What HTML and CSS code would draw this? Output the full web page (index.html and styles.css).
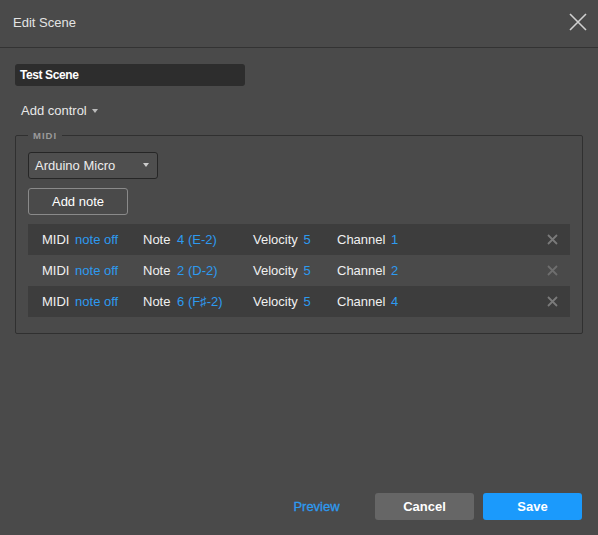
FILE: index.html
```html
<!DOCTYPE html>
<html>
<head>
<meta charset="utf-8">
<link rel="stylesheet" href="styles.css">
</head>
<body>
<div class="dialog">
  <header class="header">
    <span class="title">Edit Scene</span>
    <svg class="close" width="18" height="18" viewBox="0 0 18 18"><path d="M1 1L17 17M17 1L1 17" stroke="#d0d0d0" stroke-width="1.6" fill="none"/></svg>
  </header>
  <main class="content">
    <div class="name-input">Test Scene</div>
    <div class="add-control">Add control <span class="caret"></span></div>
    <fieldset class="group">
      <legend class="legend">MIDI</legend>
      <div class="select">Arduino Micro <span class="caret"></span></div>
      <button class="outline-btn">Add note</button>
      <div class="rows">
        <div class="row dark">
          <div class="cell c1">MIDI <span class="val">note off</span></div>
          <div class="cell c2">Note <span class="val">4 (E-2)</span></div>
          <div class="cell c3">Velocity <span class="val">5</span></div>
          <div class="cell c4">Channel <span class="val">1</span></div>
          <svg class="del" width="11" height="11" viewBox="0 0 11 11"><path d="M1 1L10 10M10 1L1 10" stroke="#7a7a7a" stroke-width="1.8" fill="none"/></svg>
        </div>
        <div class="row">
          <div class="cell c1">MIDI <span class="val">note off</span></div>
          <div class="cell c2">Note <span class="val">2 (D-2)</span></div>
          <div class="cell c3">Velocity <span class="val">5</span></div>
          <div class="cell c4">Channel <span class="val">2</span></div>
          <svg class="del" width="11" height="11" viewBox="0 0 11 11"><path d="M1 1L10 10M10 1L1 10" stroke="#6e6e6e" stroke-width="1.8" fill="none"/></svg>
        </div>
        <div class="row dark">
          <div class="cell c1">MIDI <span class="val">note off</span></div>
          <div class="cell c2">Note <span class="val">6 (F♯-2)</span></div>
          <div class="cell c3">Velocity <span class="val">5</span></div>
          <div class="cell c4">Channel <span class="val">4</span></div>
          <svg class="del" width="11" height="11" viewBox="0 0 11 11"><path d="M1 1L10 10M10 1L1 10" stroke="#7a7a7a" stroke-width="1.8" fill="none"/></svg>
        </div>
      </div>
    </fieldset>
  </main>
  <footer class="footer">
    <button class="btn link">Preview</button>
    <button class="btn cancel">Cancel</button>
    <button class="btn save">Save</button>
  </footer>
</div>
</body>
</html>
```
FILE: styles.css
```css
html, body {
  margin: 0;
  padding: 0;
  height: 100%;
}
body {
  background: #4a4a4a;
  color: #ececec;
  font-family: "Liberation Sans", Arial, sans-serif;
  font-size: 13px;
}
.dialog {
  display: flex;
  flex-direction: column;
  height: 535px;
}
.header {
  border-bottom: 1px solid #333333;
  display: flex;
  align-items: center;
  justify-content: space-between;
  padding: 0 11px 0 13px;
  box-sizing: border-box;
  height: 48px;
}
.title {
  color: #e4e4e4;
  margin-top: -3px;
}
.close {
  margin-top: -4px;
}
.content {
  padding: 16px 15px 0 15px;
}
.name-input {
  width: 230px;
  height: 22px;
  box-sizing: border-box;
  background: #2d2d2d;
  border-radius: 3px;
  padding: 0 5px;
  line-height: 23px;
  font-size: 12px;
  font-weight: bold;
  letter-spacing: -0.4px;
  color: #ffffff;
}
.add-control {
  margin: 17px 0 0 6px;
  height: 16px;
  line-height: 16px;
  color: #e8e8e8;
}
.caret {
  display: inline-block;
  width: 0;
  height: 0;
  border-left: 3px solid transparent;
  border-right: 3px solid transparent;
  border-top: 4px solid #bbbbbb;
  vertical-align: middle;
  margin-left: 2px;
  margin-top: -2px;
}
.group {
  margin: 11px 0 0 0;
  padding: 11px 12px 16px 12px;
  border: 1px solid #303030;
  border-radius: 2px;
}
.legend {
  margin-left: 0;
  padding: 0 5px;
  font-size: 9.5px;
  font-weight: bold;
  letter-spacing: 1px;
  color: #9a9a9a;
}
.select {
  width: 130px;
  height: 27px;
  box-sizing: border-box;
  background: #4f4f4f;
  border: 1px solid #262626;
  border-radius: 3px;
  display: flex;
  align-items: center;
  justify-content: space-between;
  padding: 0 8px 0 6px;
  color: #ececec;
}
.select .caret {
  border-left-width: 3.5px;
  border-right-width: 3.5px;
  border-top-width: 4px;
  border-top-color: #cccccc;
}
.outline-btn {
  display: block;
  margin-top: 9px;
  width: 100px;
  height: 27px;
  background: transparent;
  border: 1px solid #8a8a8a;
  border-radius: 3px;
  color: #ffffff;
  font-family: inherit;
  font-size: 13px;
  padding: 0;
}
.rows {
  margin-top: 9px;
}
.row {
  display: flex;
  align-items: center;
  height: 31px;
  padding: 0 12px 0 14px;
  color: #f0f0f0;
}
.row.dark {
  background: #3d3d3d;
}
.cell {
  white-space: nowrap;
}
.c1 { width: 101px; }
.c2 { width: 110px; }
.c3 { width: 84px; }
.c4 { flex: 1; }
.val {
  color: #2d9af0;
  margin-left: 2px;
}
.c2 .val { margin-left: 3px; }
.footer {
  margin-top: auto;
  display: flex;
  justify-content: flex-end;
  gap: 9px;
  padding: 0 16px 15px 0;
}
.btn {
  width: 99px;
  height: 27px;
  border: none;
  border-radius: 3px;
  font-family: inherit;
  font-size: 13px;
  font-weight: bold;
  color: #ffffff;
  padding: 0;
}
.btn.link {
  background: transparent;
  color: #2d9af0;
  font-weight: normal;
  -webkit-text-stroke: 0.3px #2d9af0;
}
.btn.cancel {
  background: #666666;
}
.btn.save {
  background: #1b9afc;
}
```
